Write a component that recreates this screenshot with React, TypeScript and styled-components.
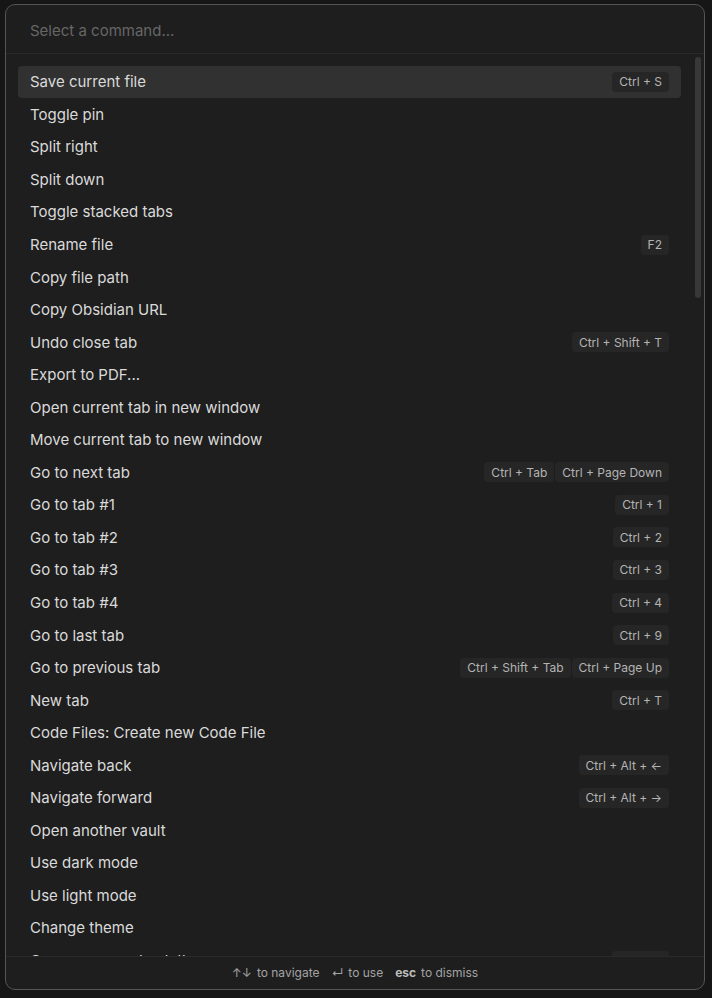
import styled, { createGlobalStyle } from "styled-components";

const GlobalStyle = createGlobalStyle`
  html, body {
    margin: 0;
    padding: 0;
    background: #161616;
    font-family: Inter, "Noto Sans", sans-serif;
  }
  * {
    box-sizing: border-box;
  }
`;

const Backdrop = styled.div`
  width: 712px;
  height: 998px;
  padding: 4px 0 0 5px;
  background: #161616;
  overflow: hidden;
`;

const Modal = styled.div`
  width: 700px;
  height: 986px;
  display: flex;
  flex-direction: column;
  background: #1e1e1e;
  border: 1px solid #555;
  border-radius: 10px;
  overflow: hidden;
`;

const Prompt = styled.div`
  height: 49px;
  flex-shrink: 0;
  display: flex;
  align-items: center;
  padding: 3px 24px 0;
  border-bottom: 1px solid #2a2a2a;
  font-size: 15px;
  color: #666;
`;

const Body = styled.div`
  flex: 1;
  min-height: 0;
  display: flex;
`;

const Results = styled.div`
  flex: 1;
  overflow: hidden;
  padding: 11.5px 11px 0 12px;
`;

const ScrollTrack = styled.div`
  width: 12px;
  flex-shrink: 0;
  padding: 3px 3px 0;
`;

const Thumb = styled.div`
  width: 6px;
  height: 241px;
  border-radius: 3px;
  background: #383838;
`;

const Item = styled.div<{ $active?: boolean }>`
  height: 32.55px;
  display: flex;
  align-items: center;
  justify-content: space-between;
  padding: 0 12px;
  border-radius: 4px;
  font-size: 15px;
  color: #dadada;
  background: ${(p) => (p.$active ? "#313131" : "transparent")};
  white-space: nowrap;
`;

const Keys = styled.div`
  display: flex;
  gap: 1px;
`;

const Chip = styled.span`
  height: 20px;
  display: inline-flex;
  align-items: center;
  padding: 0 7px;
  border-radius: 4px;
  background: #262626;
  font-size: 12px;
  color: #b4b4b4;
`;

const Footer = styled.div`
  height: 33px;
  flex-shrink: 0;
  display: flex;
  align-items: center;
  justify-content: center;
  gap: 12px;
  padding-bottom: 1px;
  border-top: 1px solid #2a2a2a;
  font-size: 12px;
  color: #a3a3a3;
`;

const Hint = styled.span`
  display: inline-flex;
  align-items: center;
  gap: 5px;
`;

const HintKey = styled.span<{ $bold?: boolean }>`
  font-weight: ${(p) => (p.$bold ? 700 : 400)};
  color: ${(p) => (p.$bold ? "#bdbdbd" : "#a3a3a3")};
`;

type Command = { name: string; keys?: string[] };

const commands: Command[] = [
  { name: "Save current file", keys: ["Ctrl + S"] },
  { name: "Toggle pin" },
  { name: "Split right" },
  { name: "Split down" },
  { name: "Toggle stacked tabs" },
  { name: "Rename file", keys: ["F2"] },
  { name: "Copy file path" },
  { name: "Copy Obsidian URL" },
  { name: "Undo close tab", keys: ["Ctrl + Shift + T"] },
  { name: "Export to PDF..." },
  { name: "Open current tab in new window" },
  { name: "Move current tab to new window" },
  { name: "Go to next tab", keys: ["Ctrl + Tab", "Ctrl + Page Down"] },
  { name: "Go to tab #1", keys: ["Ctrl + 1"] },
  { name: "Go to tab #2", keys: ["Ctrl + 2"] },
  { name: "Go to tab #3", keys: ["Ctrl + 3"] },
  { name: "Go to tab #4", keys: ["Ctrl + 4"] },
  { name: "Go to last tab", keys: ["Ctrl + 9"] },
  { name: "Go to previous tab", keys: ["Ctrl + Shift + Tab", "Ctrl + Page Up"] },
  { name: "New tab", keys: ["Ctrl + T"] },
  { name: "Code Files: Create new Code File" },
  { name: "Navigate back", keys: ["Ctrl + Alt + ←"] },
  { name: "Navigate forward", keys: ["Ctrl + Alt + →"] },
  { name: "Open another vault" },
  { name: "Use dark mode" },
  { name: "Use light mode" },
  { name: "Change theme" },
  { name: "Open command palette", keys: ["Ctrl + P"] },
  { name: "Open quick switcher", keys: ["Ctrl + O"] },
];

export default function App() {
  return (
    <>
      <GlobalStyle />
      <Backdrop>
        <Modal>
          <Prompt>Select a command...</Prompt>
          <Body>
            <Results>
              {commands.map((c, i) => (
                <Item key={c.name} $active={i === 0}>
                  <span>{c.name}</span>
                  {c.keys && (
                    <Keys>
                      {c.keys.map((k) => (
                        <Chip key={k}>{k}</Chip>
                      ))}
                    </Keys>
                  )}
                </Item>
              ))}
            </Results>
            <ScrollTrack>
              <Thumb />
            </ScrollTrack>
          </Body>
          <Footer>
            <Hint>
              <HintKey>↑↓</HintKey>to navigate
            </Hint>
            <Hint>
              <HintKey>↵</HintKey>to use
            </Hint>
            <Hint>
              <HintKey $bold>esc</HintKey>to dismiss
            </Hint>
          </Footer>
        </Modal>
      </Backdrop>
    </>
  );
}
